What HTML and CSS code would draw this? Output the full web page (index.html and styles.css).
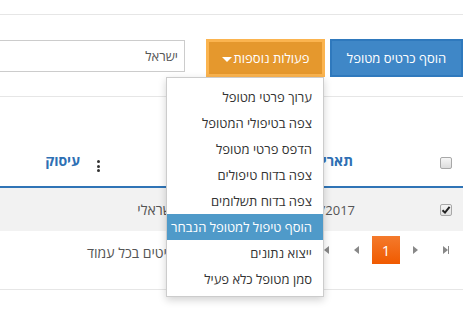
FILE: index.html
```html
<!DOCTYPE html>
<html lang="he">
<head>
<meta charset="utf-8">
<link rel="stylesheet" href="styles.css">
</head>
<body>
<div class="page" dir="rtl">
  <div class="rule top"></div>
  <div class="toolbar">
    <button class="btn btn-blue">הוסף כרטיס מטופל</button>
    <button class="btn btn-orange">פעולות נוספות<span class="caret"></span></button>
    <div class="search"><span>ישראל</span></div>
  </div>
  <div class="rule mid"></div>

  <div class="grid">
    <div class="thead">
      <div class="cell c-check"><span class="cb"></span></div>
      <div class="cell c-gap"></div>
      <div class="cell c-date"><span class="th">תאריך</span></div>
      <div class="cell c-country"><span class="kebab"><i></i><i></i><i></i></span></div>
      <div class="cell c-job"><span class="th">עיסוק</span></div>
    </div>
    <div class="trow">
      <div class="cell c-check"><span class="cb checked"><svg viewBox="0 0 10 10" width="10" height="10"><path d="M1.5 5.2 L4 7.6 L8.6 1.8" fill="none" stroke="#222" stroke-width="2"/></svg></span></div>
      <div class="cell c-gap"></div>
      <div class="cell c-date"><span class="td">12/03/2017</span></div>
      <div class="cell c-country"><span class="td">ישראלי</span></div>
      <div class="cell c-job"></div>
    </div>
    <div class="pager">
      <span class="pg"><span class="ico last"></span></span>
      <span class="pg"><span class="ico next"></span></span>
      <span class="pg current">1</span>
      <span class="pg"><span class="ico prev"></span></span>
      <span class="pg"><span class="ico first"></span></span>
      <span class="info">20 פריטים בכל עמוד</span>
    </div>
  </div>
  <div class="rule bottom"></div>

  <ul class="menu">
    <li>ערוך פרטי מטופל</li>
    <li>צפה בטיפולי המטופל</li>
    <li>הדפס פרטי מטופל</li>
    <li>צפה בדוח טיפולים</li>
    <li>צפה בדוח תשלומים</li>
    <li class="active">הוסף טיפול למטופל הנבחר</li>
    <li>ייצוא נתונים</li>
    <li>סמן מטופל כלא פעיל</li>
  </ul>
</div>
</body>
</html>
```

FILE: styles.css
```css
* { box-sizing: border-box; }
html, body { margin: 0; padding: 0; background: #fff; }
body {
  font-family: "Open Sans", "DejaVu Sans", sans-serif;
  font-size: 13px;
  color: #555;
  width: 471px;
  height: 311px;
  overflow: hidden;
}
.page {
  position: relative;
  width: 463px;
  height: 311px;
  margin: 0 auto 0 0;
  overflow: hidden;
}
.rule { border-top: 1px solid #e6e6e6; width: 463px; }
.rule.top { margin-top: 14px; }
.rule.mid { margin-top: 19px; }

.toolbar {
  display: flex;
  align-items: flex-start;
  margin-top: 24px;
  height: 38px;
}
.btn {
  font-family: inherit;
  height: 38px;
  color: #fff;
  font-size: 13px;
  padding: 0;
  white-space: nowrap;
  flex: none;
  display: flex;
  align-items: center;
  justify-content: center;
}
.btn-blue {
  width: 133px;
  background: #3f87c7;
  border: 2px solid #2f79bd;
}
.btn-orange {
  width: 119px;
  margin-right: 5px;
  background: #e5982d;
  border: 3px solid #fbb44f;
}
.caret {
  display: inline-block;
  width: 0; height: 0;
  border-top: 5px solid #fff;
  border-left: 5px solid transparent;
  border-right: 5px solid transparent;
  margin-right: 2px;
  margin-top: 2px;
}
.search {
  margin-right: 21px;
  margin-top: 1px;
  width: 220px;
  flex: none;
  height: 32px;
  border: 1px solid #ccc;
  display: flex;
  align-items: center;
  padding-right: 6px;
  color: #555;
  font-size: 13px;
}

.grid { width: 463px; }
.thead, .trow { display: flex; }
.thead {
  padding-top: 41px;
  height: 91px;
  border-bottom: 2px solid #2f74b6;
}
.thead .cell { height: 48px; }
.trow { height: 43px; background: #f2f2f2; }
.cell { display: flex; align-items: center; flex: none; }
.c-check { width: 34px; justify-content: center; }
.c-gap { width: 68px; }
.c-date { width: 180px; padding-right: 8px; }
.c-country { width: 93px; padding-right: 8px; padding-left: 9px; }
.thead .c-country { justify-content: flex-end; }
.c-job { width: 88px; padding-right: 8px; }
.trow .c-date { padding-right: 6px; }
.trow .c-country { padding-right: 5px; }
.th { color: #2e70b4; font-weight: bold; font-size: 14px; margin-top: -4px; }
.td { color: #555; font-size: 13px; }
.trow .c-country .td { font-size: 14px; white-space: nowrap; }

.kebab { display: flex; flex-direction: column; gap: 1.5px; margin-top: 8px; }
.kebab i { width: 3px; height: 3px; border-radius: 50%; background: #333; display: block; }

.cb {
  width: 12px; height: 12px;
  border: 1px solid #a8a8a8;
  border-radius: 2px;
  background: linear-gradient(#f6f6f6, #dcdcdc);
  display: flex; align-items: center; justify-content: center;
}
.cb.checked { background: linear-gradient(#f4f4f4, #e2e2e2); }
.thead .cb { margin-top: 1px; }

.pager {
  display: flex;
  align-items: flex-start;
  height: 58px;
  padding-top: 5px;
  padding-right: 2px;
}
.pg {
  width: 28px; height: 28px;
  margin: 0 1px;
  display: flex; align-items: center; justify-content: center;
  flex: none;
}
.pg.current {
  background: linear-gradient(#f47a2c, #f05a00);
  color: #fff;
  font-size: 15px;
}
.ico { position: relative; display: block; width: 8px; height: 8px; }
.ico::before {
  content: ""; position: absolute; top: 0;
  width: 0; height: 0;
  border-top: 4px solid transparent;
  border-bottom: 4px solid transparent;
}
.ico.next::before, .ico.last::before { border-left: 5px solid #888; left: 1px; }
.ico.prev::before, .ico.first::before { border-right: 5px solid #888; right: 1px; }
.ico.last::after, .ico.first::after {
  content: ""; position: absolute; top: 0; width: 1px; height: 8px; background: #888;
}
.ico.last::after { left: 6px; }
.ico.first::after { right: 6px; }
.info { margin-right: auto; margin-left: 87px; color: #555; font-size: 14px; line-height: 20px; margin-top: 7px; }

.menu {
  position: absolute;
  left: 166px;
  top: 77px;
  width: 158px;
  margin: 0;
  padding: 6px 0 4px;
  list-style: none;
  background: #fff;
  border: 1px solid rgba(0,0,0,0.2);
  box-shadow: 0 3px 8px rgba(0,0,0,0.18);
}
.menu li {
  height: 26px;
  line-height: 26px;
  padding-right: 11px;
  color: #333;
  font-size: 13px;
  white-space: nowrap;
}
.menu li.active { background: #4f9ac9; color: #fff; }
```
